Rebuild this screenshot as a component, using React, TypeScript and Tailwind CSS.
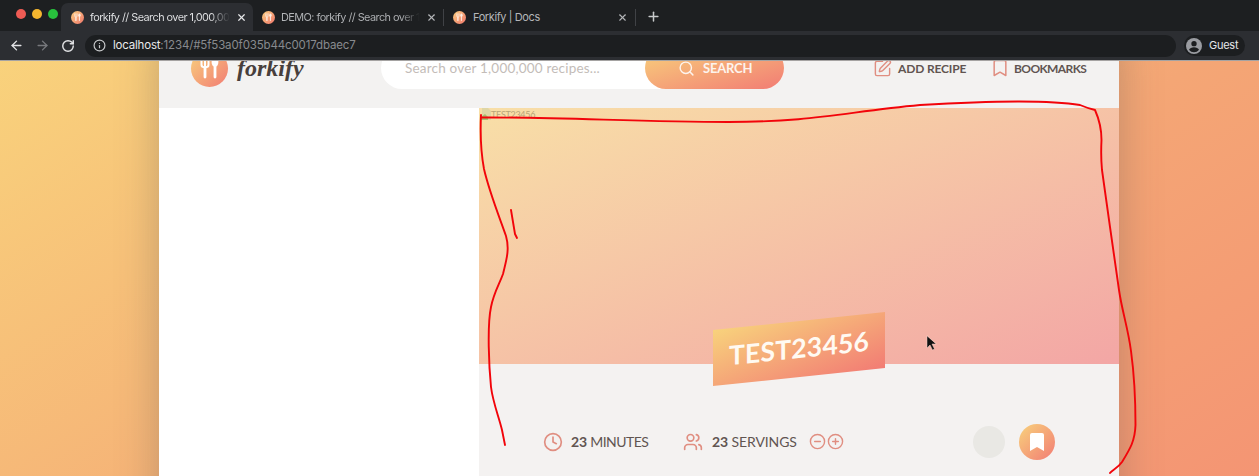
import React from "react";
import { ArrowLeft, ArrowRight, Bookmark, CircleMinus, CirclePlus, Clock, Info, Plus, RotateCw, Search, SquarePen, Users, X } from "lucide-react";

const warm = "bg-linear-to-br/srgb from-[#f8d27c] to-[#f27c74]";

function Cutlery({ className }: { className: string }) {
  return (
    <svg viewBox="0 0 37 37" className={className} fill="none" stroke="#fff" strokeLinecap="round">
      <path d="M10.500 8v7c0 3 7 3 7 0V8M14 8v19" strokeWidth="2" />
      <path d="M14 18v9M24 14v13" strokeWidth="2.800" />
      <ellipse cx="24" cy="12" rx="3.400" ry="5" fill="#fff" stroke="none" />
    </svg>
  );
}

function Favicon() {
  return (
    <span className="h-[13px] w-[13px] shrink-0 rounded-full bg-linear-to-br from-[#f9cf80] to-[#ee756c]">
      <Cutlery className="h-[13px] w-[13px] opacity-80" />
    </span>
  );
}

function Chrome() {
  return (
    <div className="h-[60px] bg-[#2c2e32] font-['Inter',sans-serif]">
      <div className="flex h-[31px] bg-[#1d1f21] text-[11px] text-[#b4b6b9]">
        <div className="flex w-[61px] items-center gap-[6px] pl-[15.500px] pb-[3px]">
          <span className="h-[10px] w-[10px] shrink-0 rounded-full bg-[#ee5b54]" />
          <span className="h-[10px] w-[10px] shrink-0 rounded-full bg-[#f5b62f]" />
          <span className="h-[10px] w-[10px] shrink-0 rounded-full bg-[#28c13d]" />
        </div>
        <div className="mt-[3px] flex w-[192px] items-center rounded-t-[7px] bg-[#2c2e32] pl-[10px]">
          <Favicon />
          <span className="ml-[6px] w-[140px] whitespace-nowrap bg-linear-to-r from-[#e6e7e9] from-86% to-[#2c2e32] bg-clip-text text-[10.900px] tracking-[-0.550px] text-transparent">
            forkify // Search over 1,000,00
          </span>
          <X className="ml-[6px] h-[11px] w-[11px] text-[#e6e7e9]" strokeWidth={2.6} />
        </div>
        <div className="flex w-[191px] items-center pl-[9px] pt-[3px]">
          <Favicon />
          <span className="ml-[6px] w-[139px] whitespace-nowrap bg-linear-to-r from-[#b4b6b9] from-86% to-[#1d1f21] bg-clip-text text-[10.900px] tracking-[-0.550px] text-transparent">
            DEMO: forkify // Search over 1,
          </span>
          <X className="ml-[6px] h-[11px] w-[11px]" strokeWidth={2.4} />
          <span className="ml-[6px] h-[17px] w-px bg-[#404246]" />
        </div>
        <div className="flex w-[192px] items-center pl-[9px] pt-[3px]">
          <Favicon />
          <span className="ml-[7px] w-[144px] tracking-[-0.400px]">Forkify | Docs</span>
          <X className="h-[11px] w-[11px]" strokeWidth={2.4} />
          <span className="ml-[7px] h-[17px] w-px bg-[#404246]" />
        </div>
        <Plus className="ml-[10px] mt-[9px] h-[15px] w-[15px] text-[#c8cacc]" strokeWidth={2.4} />
      </div>
      <div className="flex h-[29px] items-center">
        <ArrowLeft className="ml-[9px] h-[15px] w-[15px] text-[#e2e3e5]" strokeWidth={2.2} />
        <ArrowRight className="ml-[11px] h-[15px] w-[15px] text-[#77797d]" strokeWidth={2.2} />
        <RotateCw className="ml-[11px] h-[14px] w-[14px] text-[#e2e3e5]" strokeWidth={2.5} />
        <div className="ml-[10px] flex h-[22px] w-[1091px] items-center rounded-full bg-[#1c1e20] pl-[8px] text-[11.500px]">
          <Info className="h-[13px] w-[13px] text-[#c6c8ca]" strokeWidth={2.2} />
          <span className="ml-[7px] tracking-[-0.200px] text-[#e9eaec]">localhost</span>
          <span className="tracking-[-0.140px] text-[#888a8e]">:1234/#5f53a0f035b44c0017dbaec7</span>
        </div>
        <div className="ml-[8px] flex h-[21px] w-[61px] items-center rounded-full bg-[#1c1e20] pl-[2px]">
          <svg viewBox="0 0 24 24" className="h-[16px] w-[16px]">
            <circle cx="12" cy="12" r="12" fill="#9a9ca1" />
            <circle cx="12" cy="8.500" r="4" fill="#1c1e20" />
            <path d="M4.500 17.500c2-5 13-5 15 0-3.500 5-11.500 5-15 0Z" fill="#1c1e20" />
          </svg>
          <span className="ml-[7px] text-[11px] tracking-[-0.250px] text-[#e6e7e9]">Guest</span>
        </div>
      </div>
    </div>
  );
}

function SiteHeader() {
  return (
    <header className="flex h-20 items-center bg-[#f3f2f1] pl-8 text-[#615551]">
      <span className={`h-[37px] w-[37px] rounded-full ${warm}`}>
        <Cutlery className="h-[37px] w-[37px]" />
      </span>
      <span className="ml-[9px] w-[144px] font-['Liberation_Serif',serif] text-[24px] font-bold italic leading-none text-[#483f3c]">
        forkify
      </span>
      <form className="flex h-[42px] w-[403px] rounded-full bg-white">
        <span className="flex w-[264px] items-center pl-6 text-[13.500px] tracking-[0.200px] text-[#c3bcb8]">
          Search over 1,000,000 recipes...
        </span>
        <span className={`flex w-[139px] items-center rounded-full pl-[33px] text-[13px] font-bold text-[#fdf4ee] ${warm}`}>
          <Search className="h-[17px] w-[17px]" strokeWidth={2} />
          <span className="ml-[8px] pt-[2px] tracking-[-0.200px]">SEARCH</span>
        </span>
      </form>
      <nav className="ml-[89px] flex items-center text-[12px] font-bold">
        <SquarePen className="h-[19px] w-[19px] text-[#e08e81]" strokeWidth={1.8} />
        <span className="ml-[6px] w-[92px] pt-px tracking-[-0.150px]">ADD RECIPE</span>
        <Bookmark className="h-[20px] w-[20px] text-[#e08e81]" strokeWidth={1.8} />
        <span className="ml-[4px] pt-px tracking-[-0.600px]">BOOKMARKS</span>
      </nav>
    </header>
  );
}

function Recipe() {
  return (
    <section className="w-[640px] bg-[#f4f2f1] text-[#615551]">
      <div className="relative h-64 bg-linear-to-br/srgb from-[#f8dfa7] to-[#f3a6a5]">
        <div className="flex items-center pl-[2px] text-[9px] leading-[11px] tracking-[-0.300px] text-[#b9a578]">
          <svg viewBox="0 0 10 12" className="h-[12px] w-[10px]">
            <path d="M1 0h6l3 3v9H1Z" fill="#dfd6a5" />
            <path d="M0 12V9l4-3 3 3v3Z" fill="#a5c071" />
          </svg>
          TEST23456
        </div>
        <h1 className={`absolute left-[233.500px] top-[212.500px] flex h-[56px] w-[172px] -skew-y-6 items-center justify-center text-[26.500px] font-bold tracking-[0.200px] text-[#fffaf2] ${warm}`}>
          TEST23456
        </h1>
      </div>
      <div className="flex h-[155px] items-center pl-[64px] text-[14px]">
        <Clock className="h-[20px] w-[20px] text-[#e08e81]" strokeWidth={2} />
        <span className="ml-[8px] w-[112px] tracking-[-0.550px]"><b className="tracking-normal">23</b> MINUTES</span>
        <Users className="h-[20px] w-[20px] text-[#e08e81]" strokeWidth={2} />
        <span className="ml-[9px] w-[97px] tracking-[-0.100px]"><b>23</b> SERVINGS</span>
        <CircleMinus className="h-[17px] w-[17px] text-[#e08e81]" strokeWidth={2} />
        <CirclePlus className="ml-[1px] h-[17px] w-[17px] text-[#e08e81]" strokeWidth={2} />
        <span className="ml-[129px] h-[32px] w-[32px] rounded-full bg-[#e9e8e4]" />
        <span className={`ml-[14px] flex h-[36px] w-[36px] items-center justify-center rounded-full ${warm}`}>
          <svg viewBox="0 0 14 18" className="h-[18px] w-[14px]">
            <path d="M2 0h10a2 2 0 0 1 2 2v16l-7-4-7 4V2a2 2 0 0 1 2-2Z" fill="#fff" />
          </svg>
        </span>
      </div>
    </section>
  );
}

function Annotations() {
  return (
    <svg viewBox="0 0 1259 476" className="pointer-events-none absolute inset-0 h-[476px] w-[1259px]" fill="none" strokeLinecap="round" strokeLinejoin="round">
      <g stroke="#f2040a" strokeWidth="1.900">
        <path d="M481 115C480 137 481 153 484 169C489 191 499 216 506 236C510 250 506 261 503 274C499 285 494 292 491 307C487 326 489 367 491 387C493 403 499 417 502 430L505 445" />
        <path d="M482 117.500C560 117 640 122 728 122C813 122 845 112 920 105C970 102 1045 99 1080 105Q1087 108 1095 110C1099 119 1101.500 130 1101.500 140C1101 150 1101 160 1102 170L1110 227L1119 290C1122 311 1128 328 1131 351C1134 373 1135.500 400 1135.500 425C1135 441 1130 449 1122 462C1118 468 1112 470 1110 473" />
        <path d="M511 210L515 234L517 238" />
      </g>
      <path d="M927 336v12l3-3 2.500 5 2-1-2.500-5h4Z" fill="#111" stroke="#f7d7cc" strokeWidth="0.500" />
    </svg>
  );
}

export default function App() {
  return (
    <div className="relative h-[476px] w-[1259px] overflow-hidden font-['Lato',sans-serif]">
      <Chrome />
      <div className="h-[416px] overflow-hidden border-t border-[#a5a3a2]">
        <div className="-mt-[33px] h-[760px] bg-linear-to-br/srgb from-[#f9d47c] via-[#f4a675] to-[#f48972] pl-[159px]">
          <main className="h-[740px] w-[960px] bg-white shadow-[0_10px_38px_rgba(97,85,81,0.36)]">
            <SiteHeader />
            <div className="flex h-[660px] bg-linear-to-r from-white from-50% to-[#f4f2f1] to-50%">
              <aside className="w-[320px] bg-white" />
              <Recipe />
            </div>
          </main>
        </div>
      </div>
      <Annotations />
    </div>
  );
}
